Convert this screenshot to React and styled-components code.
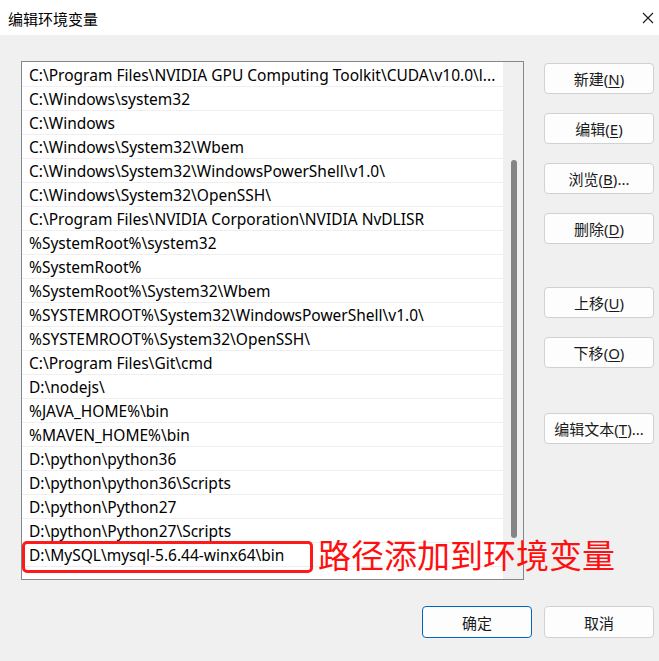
import styled, { createGlobalStyle } from "styled-components";

const GlobalStyle = createGlobalStyle`
  html, body {
    margin: 0;
    padding: 0;
    background: #f0f0f0;
  }
  * {
    box-sizing: border-box;
  }
`;

const paths = [
  "C:\\Program Files\\NVIDIA GPU Computing Toolkit\\CUDA\\v10.0\\l...",
  "C:\\Windows\\system32",
  "C:\\Windows",
  "C:\\Windows\\System32\\Wbem",
  "C:\\Windows\\System32\\WindowsPowerShell\\v1.0\\",
  "C:\\Windows\\System32\\OpenSSH\\",
  "C:\\Program Files\\NVIDIA Corporation\\NVIDIA NvDLISR",
  "%SystemRoot%\\system32",
  "%SystemRoot%",
  "%SystemRoot%\\System32\\Wbem",
  "%SYSTEMROOT%\\System32\\WindowsPowerShell\\v1.0\\",
  "%SYSTEMROOT%\\System32\\OpenSSH\\",
  "C:\\Program Files\\Git\\cmd",
  "D:\\nodejs\\",
  "%JAVA_HOME%\\bin",
  "%MAVEN_HOME%\\bin",
  "D:\\python\\python36",
  "D:\\python\\python36\\Scripts",
  "D:\\python\\Python27",
  "D:\\python\\Python27\\Scripts",
  "D:\\MySQL\\mysql-5.6.44-winx64\\bin",
];

const sideButtons = [
  { label: "新建", key: "N", space: 0 },
  { label: "编辑", key: "E", space: 19 },
  { label: "浏览", key: "B", tail: "...", space: 19 },
  { label: "删除", key: "D", space: 19 },
  { label: "上移", key: "U", space: 43 },
  { label: "下移", key: "O", space: 19 },
  { label: "编辑文本", key: "T", tail: "...", space: 45 },
];

const font = `"Noto Sans", "Noto Sans CJK SC", sans-serif`;

const Window = styled.div`
  position: relative;
  width: 659px;
  height: 661px;
  background: #f0f0f0;
  font-family: ${font};
  color: #1a1a1a;
  display: flex;
  flex-direction: column;
  overflow: hidden;
`;

const TitleBar = styled.div`
  height: 35px;
  background: #ffffff;
  display: flex;
  align-items: center;
  justify-content: space-between;
  padding: 0 0 0 8px;
`;

const Title = styled.span`
  font-size: 15px;
  color: #000;
  margin-top: 1px;
`;

const CloseButton = styled.div`
  width: 46px;
  height: 35px;
  display: flex;
  align-items: center;
  justify-content: center;
  margin-right: -12px;
`;

const Body = styled.div`
  display: flex;
  padding: 26px 0 0 21px;
  gap: 20px;
`;

const ListBox = styled.div`
  width: 503px;
  height: 519px;
  border: 1px solid #828790;
  background: #ffffff;
  display: flex;
`;

const Rows = styled.div`
  flex: 1;
  padding-top: 1px;
  overflow: hidden;
`;

const Row = styled.div`
  height: 24px;
  border-bottom: 1px solid #efefef;
  padding-left: 7px;
  display: flex;
  align-items: center;
  font-size: 15.5px;
  white-space: nowrap;
  overflow: hidden;
  color: #000;
`;

const Track = styled.div`
  width: 20px;
  background: #f0f0f0;
  display: flex;
  justify-content: center;
`;

const Thumb = styled.div`
  width: 6px;
  height: 378px;
  margin-top: 98px;
  margin-left: 1px;
  background: #858585;
  border-radius: 3px;
`;

const ButtonColumn = styled.div`
  display: flex;
  flex-direction: column;
  padding-top: 2px;
`;

const Button = styled.div`
  width: 110px;
  height: ${(p) => (p.$tall ? 32 : 31)}px;
  margin-top: ${(p) => p.$space || 0}px;
  background: #fdfdfd;
  border: 1px solid ${(p) => (p.$primary ? "#0067c0" : "#d1d1d1")};
  border-radius: 4px;
  display: flex;
  align-items: center;
  justify-content: center;
  font-size: 15px;
  color: #1a1a1a;
  white-space: nowrap;
`;

const Key = styled.span`
  text-decoration: underline;
  text-underline-offset: 2px;
`;

const Footer = styled.div`
  display: flex;
  justify-content: flex-end;
  gap: 12px;
  padding: 26px 5px 0 0;
`;

const Annotation = styled.div`
  position: absolute;
  left: 22px;
  top: 541px;
  display: flex;
  align-items: center;
  gap: 5px;
`;

const RedBox = styled.div`
  width: 291px;
  height: 32px;
  border: 3px solid #ff1a1a;
  border-radius: 5px;
`;

const RedText = styled.span`
  font-family: "Noto Sans CJK SC", sans-serif;
  font-size: 33px;
  color: #ff1010;
  line-height: 1;
  margin-top: -6px;
`;

export default function App() {
  return (
    <>
      <GlobalStyle />
      <Window>
        <TitleBar>
          <Title>编辑环境变量</Title>
          <CloseButton>
            <svg width="12" height="12" viewBox="0 0 12 12">
              <path d="M1 1 L11 11 M11 1 L1 11" stroke="#1a1a1a" strokeWidth="1.1" />
            </svg>
          </CloseButton>
        </TitleBar>
        <Body>
          <ListBox>
            <Rows>
              {paths.map((p, i) => (
                <Row key={i}>{p}</Row>
              ))}
            </Rows>
            <Track>
              <Thumb />
            </Track>
          </ListBox>
          <ButtonColumn>
            {sideButtons.map((b) => (
              <Button key={b.key} $space={b.space}>
                {b.label}(<Key>{b.key}</Key>){b.tail}
              </Button>
            ))}
          </ButtonColumn>
        </Body>
        <Footer>
          <Button $primary $tall>确定</Button>
          <Button $tall>取消</Button>
        </Footer>
        <Annotation>
          <RedBox />
          <RedText>路径添加到环境变量</RedText>
        </Annotation>
      </Window>
    </>
  );
}
